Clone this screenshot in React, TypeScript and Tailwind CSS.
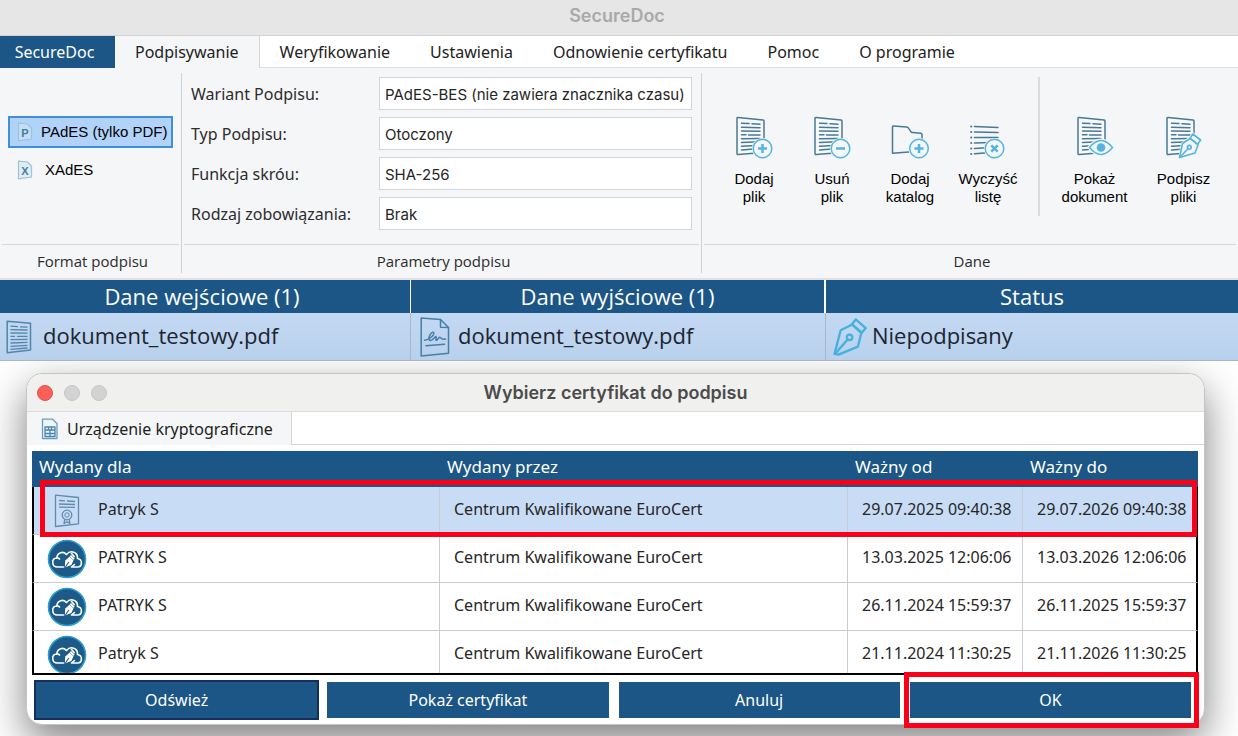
import type { ReactNode } from "react";
import clsx from "clsx";

const TABS = ["Podpisywanie", "Weryfikowanie", "Ustawienia", "Odnowienie certyfikatu", "Pomoc", "O programie"];

const FIELDS = [
  { id: "variant", label: "Wariant Podpisu:", value: "PAdES-BES (nie zawiera znacznika czasu)" },
  { id: "type", label: "Typ Podpisu:", value: "Otoczony" },
  { id: "hash", label: "Funkcja skróu:", value: "SHA-256" },
  { id: "commitment", label: "Rodzaj zobowiązania:", value: "Brak" },
];

const CERTS = [
  { name: "Patryk S", from: "29.07.2025 09:40:38", to: "29.07.2026 09:40:38", selected: true },
  { name: "PATRYK S", from: "13.03.2025 12:06:06", to: "13.03.2026 12:06:06", selected: false },
  { name: "PATRYK S", from: "26.11.2024 15:59:37", to: "26.11.2025 15:59:37", selected: false },
  { name: "Patryk S", from: "21.11.2024 11:30:25", to: "21.11.2026 11:30:25", selected: false },
];

const DARK = "#4a7895";
const LIGHT = "#55b4e2";
const PAPER = "#f4f6f8";

function IconBox({ children }: { children: ReactNode }) {
  return (
    <svg width="40" height="44" viewBox="0 0 40 44" fill="none" strokeLinecap="round" strokeLinejoin="round">
      {children}
    </svg>
  );
}

function Sheet() {
  return (
    <g stroke={DARK} strokeWidth="1.5">
      <path d="M4.2 1.5 29 4q1 .1 1 1v30.500q0 1-1 1.100L4.200 38.500q-1.200.1-1.200-1V2.500q0-1.100 1.200-1Z" fill="#f6fafd" />
      <path d="M7.500 7.200 15 7.600M18 7.800 26 8.200M7.500 11.200 26 11.800M7.500 15 26 15.300M7.500 18.800 12 18.800M14.500 18.900 26 18.900M7.500 22.700 26 22.400M7.500 26.500 26 25.800M7.500 30.200 26 29.200M7.500 34 26 32.600" />
    </g>
  );
}

function Badge({ x = 28.5, sign }: { x?: number; sign: "plus" | "minus" | "cross" }) {
  return (
    <g transform={`translate(${x} 32.500)`} stroke={LIGHT}>
      <circle r="10.600" fill={PAPER} stroke="none" />
      <circle r="9.300" fill={PAPER} strokeWidth="1.500" />
      {sign === "plus" && <path d="M-4.500 0H4.500M0-4.500V4.500" strokeWidth="2.500" strokeLinecap="butt" />}
      {sign === "minus" && <path d="M-4.500 0H4.500" strokeWidth="2.500" strokeLinecap="butt" />}
      {sign === "cross" && <path d="M-3.200-3.200 3.200 3.200M3.200-3.200-3.200 3.200" strokeWidth="2.500" strokeLinecap="butt" />}
    </g>
  );
}

function Pen() {
  return (
    <>
      <path d="M14 43 17 27 26 20 29 16 38 24 33 38Z" fill={PAPER} stroke="none" />
      <path d="M15.500 41.500 18.500 27.500 26 22.500 34 29 31 37Z" fill={PAPER} />
      <path d="M26.200 22.200 28.800 18 36.600 24 33.600 28.200Z" fill={PAPER} />
      <path d="M16 41 24.300 32.500" />
      <circle cx="25.300" cy="31.300" r="1.900" />
    </>
  );
}

const ACTIONS = [
  { lines: ["Dodaj", "plik"], icon: <><Sheet /><Badge sign="plus" /></> },
  { lines: ["Usuń", "plik"], icon: <><Sheet /><Badge sign="minus" /></> },
  {
    lines: ["Dodaj", "katalog"],
    icon: (
      <>
        <path d="M2.500 11q0-1.100 1.200-1L16.500 11q1.500.1 2.200 1.300l2 3q.7 1.200 2 1.300l8 .7q1.300.1 1.300 1.300V35L2.500 37.300Z" stroke={DARK} strokeWidth="1.500" />
        <Badge x={29} sign="plus" />
      </>
    ),
  },
  {
    lines: ["Wyczyść", "listę"],
    icon: (
      <>
        <g stroke={DARK} strokeWidth="1.500">
          <path d="M6.500 10.500 30 11.500M6.500 16 30 16.500M6.500 21.400H30M6.500 27 30 26.300M6.500 32.500 30 31M6.500 37.800 20 36.800" />
          <path d="M3.200 10.400h.1M3.200 16h.1M3.200 21.400h.1M3.200 27h.1M3.200 32.500h.1M3.200 37.900h.1" strokeWidth="2" />
        </g>
        <Badge x={26.500} sign="cross" />
      </>
    ),
  },
];

const DOC_ACTIONS = [
  {
    lines: ["Pokaż", "dokument"],
    icon: (
      <>
        <Sheet />
        <path d="M14.500 31.500Q26 17.500 37.500 31.500Q26 45.500 14.500 31.500Z" fill={PAPER} stroke={PAPER} strokeWidth="4" />
        <path d="M14.500 31.500Q26 17.500 37.500 31.500Q26 45.500 14.500 31.500Z" fill={PAPER} stroke={LIGHT} strokeWidth="1.500" />
        <circle cx="26" cy="31.500" r="4.300" fill={LIGHT} />
      </>
    ),
  },
  {
    lines: ["Podpisz", "pliki"],
    icon: (
      <>
        <Sheet />
        <g stroke={LIGHT} strokeWidth="1.600"><Pen /></g>
      </>
    ),
  },
];

function ActionButton({ lines, icon, wide }: { lines: string[]; icon: ReactNode; wide?: boolean }) {
  return (
    <button
      className={clsx(
        "flex flex-col items-center gap-2.5 text-center font-['Liberation_Sans',sans-serif] text-[15px] leading-[18px] text-black",
        wide ? "w-[89px]" : "w-[78px]",
      )}
    >
      <IconBox>{icon}</IconBox>
      <span>
        {lines[0]}
        <br />
        {lines[1]}
      </span>
    </button>
  );
}

function FormatIcon({ letter }: { letter: string }) {
  return (
    <svg width="16" height="20" viewBox="0 0 16 20" fill="none">
      <path d="M1.500 1.200 10.500 2 14.500 6V17L1.500 18.800Z" fill="#d3e6f2" fillOpacity="0.600" stroke="#9cc3da" strokeWidth="1.200" />
      <text x="8" y="14.500" textAnchor="middle" fontSize="11" fontWeight="700" fontFamily="Liberation Sans, sans-serif" fill="#3f7fa3">
        {letter}
      </text>
    </svg>
  );
}

function FileIcon() {
  return (
    <svg width="26" height="34" viewBox="0 0 26 34" fill="none" stroke="#4f86ac" strokeWidth="1.500" strokeLinejoin="round">
      <path d="M1.200 1.200 24.500 3.200V30L1.200 32.700Z" />
      <path d="M4.500 6.200 12 6.600M14 6.800 21.500 7.200M4.500 9.600 21.500 10M4.500 13 21.500 13.200M4.500 16.400H9M11 16.400H21.500M4.500 19.700 21.500 19.400M4.500 23 21.500 22.400M4.500 26.300 21.500 25.400M4.500 29.300 21.500 28" strokeWidth="1.300" />
    </svg>
  );
}

function SignedFileIcon() {
  return (
    <svg width="30" height="40" viewBox="0 0 30 40" fill="none" stroke="#457fa6" strokeWidth="1.500" strokeLinejoin="round" strokeLinecap="round">
      <path d="M1.200 1 20.500 2.500 28.500 10.500V36.200L1.200 39Z" />
      <path d="M20.500 2.500V10.200L28.500 10.500" />
      <path d="M4.500 23.200C9 23 15.500 17.500 13.500 15.300C11.500 14 7 21.500 10 23.500C12.500 24 14 20 16 19.500C17 20 15 23.500 16.500 23.300C18.500 22 19 19.500 20.500 20.500C21 22 22 22.500 25.500 22" />
      <path d="M6 28.800 24.500 27.300" />
    </svg>
  );
}

function StatusPenIcon() {
  return (
    <svg width="36" height="38" viewBox="14 16.500 24 26.500" fill="none" stroke="#45b1dc" strokeWidth="1.600" strokeLinejoin="round">
      <path d="M15.200 41.500 19.500 25 27.500 21 34 26.500 31.500 36.500 18 42Z" />
      <path d="M27.300 21 30 17.500 37 23.500 34 27Z" />
      <path d="M16 41 24.800 31" />
      <circle cx="25.700" cy="30" r="1.900" />
    </svg>
  );
}

function SimIcon() {
  return (
    <svg width="18" height="22" viewBox="0 0 18 22" fill="none" stroke="#6c9cb8" strokeWidth="1.300" strokeLinejoin="round">
      <path d="M1.500 1.200H11.500L16 5.500V20.500H1.500Z" fill="#eef6fb" />
      <path d="M4 9H14V18.500H4ZM4 12H7.500V9M4 15.500H14M10.500 9V12H14M9 12V18.500M7.500 12H10.500" stroke="#4a86a8" />
    </svg>
  );
}

function CertIcon() {
  return (
    <svg width="26" height="34" viewBox="0 0 26 34" fill="none" stroke="#5f8bb0" strokeWidth="1.300" strokeLinejoin="round">
      <path d="M1.500 1.200 24.500 3.500V29.800L1.500 32.500Z" />
      <path d="M5 6.500 11 6.900M13 7 21 7.500M5 10 21 10.500M5 13.200 21 13.400" />
      <circle cx="13" cy="21" r="4.800" />
      <circle cx="13" cy="21" r="2.200" strokeWidth="1" />
      <path d="M10.800 25.500 10 29.500 13 27.800 16 29.300 15.200 25.400" />
    </svg>
  );
}

function CloudIcon() {
  return (
    <svg width="40" height="40" viewBox="0 0 40 40" fill="none">
      <circle cx="20" cy="20" r="18.500" fill="#1d5a87" stroke="#2c9dcf" strokeWidth="1.600" />
      <g stroke="#fff" strokeWidth="1.600" strokeLinejoin="round" strokeLinecap="round">
        <path d="M16.500 28H10.500C4.500 28 4 19.500 9.800 19C10 13.500 16.500 11.500 19.500 15.500C23.500 10.500 31 13 30.500 19.500C36 20.500 35.500 28 30.500 28H24.500L27.500 25.500" />
        <path d="M9.800 19C11 18.800 12 19.200 12.500 20" />
        <path d="M24.500 14.500 27.200 17.500" />
      </g>
      <path d="M17.800 28.500 18.200 21.500 22.500 17.800 26.500 21.500 24.300 26Z" fill="#fff" />
      <path d="M18.300 28 21.800 23" stroke="#1d5a87" strokeWidth="1.100" />
      <path d="M23.300 16.800 27 20.300" stroke="#fff" strokeWidth="1.900" />
    </svg>
  );
}

function RibbonGroup({ title, className, children }: { title: string; className?: string; children: ReactNode }) {
  return (
    <section className={clsx("flex flex-col", className)}>
      <div className="h-[171px]">{children}</div>
      <h2 className="mx-0.5 border-t border-[#d5d8db] pt-1.5 pl-1 text-center font-['Open_Sans',sans-serif] text-[15px] leading-5 text-[#2c2c2c]">
        {title}
      </h2>
    </section>
  );
}

function Ribbon() {
  return (
    <div className="flex h-[212px] border-b-2 border-[#dfe1e3] bg-[#f4f6f8] py-[5px]">
      <RibbonGroup title="Format podpisu" className="w-[182px] border-r border-[#d0d3d6]">
        <div className="flex flex-col gap-1 px-2 pt-[43px] font-['Liberation_Sans',sans-serif] text-[15px] text-black">
          <button className="flex h-8 items-center gap-2 border-2 border-[#3f8fdd] bg-[#b1d3fa] pl-[7px] whitespace-nowrap">
            <FormatIcon letter="P" />
            PAdES (tylko PDF)
          </button>
          <button className="flex h-9 items-center gap-3 pl-[9px]">
            <FormatIcon letter="X" />
            XAdES
          </button>
        </div>
      </RibbonGroup>

      <RibbonGroup title="Parametry podpisu" className="w-[520px] border-r border-[#d0d3d6]">
        <div className="flex flex-col gap-[7px] pt-1 pr-[9px] pl-[9px]">
          {FIELDS.map((f) => (
            <div key={f.id} className="flex h-[33px] items-center">
              <label htmlFor={f.id} className="w-[188px] text-base text-[#2c2c2c]">
                {f.label}
              </label>
              <select
                id={f.id}
                className="h-[33px] min-w-0 flex-1 appearance-none border border-[#d3d6d9] bg-white px-[5px] pt-1 font-['Inter',sans-serif] text-[15px] text-[#262626]"
              >
                <option>{f.value}</option>
              </select>
            </div>
          ))}
        </div>
      </RibbonGroup>

      <RibbonGroup title="Dane" className="flex-1">
        <div className="flex pt-1 pl-[13px]">
          <div className="flex border-r-2 border-[#d9dcdf] pt-[39px] pr-[11px] pb-2.5">
            {ACTIONS.map((a) => (
              <ActionButton key={a.lines.join(" ")} {...a} />
            ))}
          </div>
          <div className="flex pt-[39px] pl-2.5">
            {DOC_ACTIONS.map((a) => (
              <ActionButton key={a.lines.join(" ")} {...a} wide />
            ))}
          </div>
        </div>
      </RibbonGroup>
    </div>
  );
}

function FileTable() {
  const cell = "h-12 border-r border-b border-[#a9b6c4] py-0 last:border-r-0";
  const head = "py-0 pb-px font-normal";
  return (
    <table className="w-full table-fixed border-separate border-spacing-0 font-['Open_Sans',sans-serif] text-[22px] leading-8">
      <thead>
        <tr className="bg-[#1b5686] text-white">
          <th className={clsx(head, "h-[33px] w-[411px] border-r border-white pr-1.5")}>Dane wejściowe (1)</th>
          <th className={clsx(head, "w-[415px] border-r-2 border-white")}>Dane wyjściowe (1)</th>
          <th className={head}>Status</th>
        </tr>
      </thead>
      <tbody>
        <tr className="bg-linear-to-b from-[#c3d9f3] to-[#b9d0ec] text-[#1b2530]">
          <td className={clsx(cell, "pl-1.5")}>
            <div className="flex items-center gap-[11px]">
              <FileIcon />
              <span className="pb-1">dokument_testowy.pdf</span>
            </div>
          </td>
          <td className={clsx(cell, "pl-[9px]")}>
            <div className="flex items-center gap-2">
              <SignedFileIcon />
              <span className="pb-1">dokument_testowy.pdf</span>
            </div>
          </td>
          <td className={clsx(cell, "pl-1.5")}>
            <div className="flex items-center gap-1">
              <StatusPenIcon />
              <span className="pb-1">Niepodpisany</span>
            </div>
          </td>
        </tr>
      </tbody>
    </table>
  );
}

function CertTable() {
  return (
    <div className="relative mr-1.5 ml-[5px]">
      <div className="h-[224px] overflow-hidden border-b-2 border-black">
        <table className="w-full table-fixed border-separate border-spacing-0 text-left text-base whitespace-nowrap">
          <thead>
            <tr className="h-9 bg-[#1b5686] text-[17px] text-white *:py-0 *:pb-1 *:pl-[7px] *:font-normal">
              <th>Wydany dla</th>
              <th>Wydany przez</th>
              <th className="w-[175px]">Ważny od</th>
              <th className="w-[175px]">Ważny do</th>
            </tr>
          </thead>
          <tbody>
            {CERTS.map((c) => (
              <tr
                key={c.from}
                className={clsx(
                  "h-12 text-[#262626] *:border-r *:border-b *:border-[#c9ccd0] *:py-0 *:last:border-r-2 *:last:border-r-black",
                  c.selected && "bg-[#c8dcf6]",
                )}
              >
                <td className="border-l-2 border-l-black! pl-[13px]">
                  <div className="flex items-center gap-[11px]">
                    <span className="flex w-10 shrink-0 justify-center">{c.selected ? <CertIcon /> : <CloudIcon />}</span>
                    <span className="pb-1">{c.name}</span>
                  </div>
                </td>
                <td className="pb-1! pl-3.5">Centrum Kwalifikowane EuroCert</td>
                <td className="pb-1! pl-3.5">{c.from}</td>
                <td className="pb-1! pl-3.5">{c.to}</td>
              </tr>
            ))}
          </tbody>
        </table>
      </div>
      <div className="pointer-events-none absolute top-[29px] right-px left-2 h-[57px] border-5 border-[#fb0019]" />
    </div>
  );
}

function CertDialog() {
  const button = "h-9 w-full bg-[#1b5686] text-base text-white";
  return (
    <div
      role="dialog"
      aria-labelledby="dialog-title"
      className="rounded-2xl border border-[#c4c4c4] bg-white pb-1.5 shadow-[0_16px_40px_rgba(0,0,0,0.5)]"
    >
      <header className="flex h-[38px] items-center rounded-t-2xl border-b border-[#dcdcdb] bg-[#f0f0ef] pl-2.5">
        <div className="flex w-0 gap-[11px]">
          <button aria-label="Zamknij" className="size-4 shrink-0 rounded-full border border-[#e2504a] bg-[#fb5f57]" />
          <button aria-label="Minimalizuj" className="size-4 shrink-0 rounded-full border border-[#c6c6c6] bg-[#d3d3d3]" />
          <button aria-label="Maksymalizuj" className="size-4 shrink-0 rounded-full border border-[#c6c6c6] bg-[#d3d3d3]" />
        </div>
        <h2 id="dialog-title" className="flex-1 pr-2.5 text-center font-['Inter',sans-serif] text-lg font-semibold text-[#4b4b4b]">
          Wybierz certyfikat do podpisu
        </h2>
      </header>

      <div className="mb-1.5 flex h-[33px]">
        <button className="flex w-[265px] items-center gap-2 border-r border-[#d3d6d9] bg-[#f4f6f8] pl-3.5 text-base whitespace-nowrap text-[#222]">
          <SimIcon />
          Urządzenie kryptograficzne
        </button>
        <div className="flex-1 border-b border-[#d3d6d9]" />
      </div>

      <CertTable />

      <div className="mt-[7px] grid grid-cols-4 gap-2.5 pr-[13px] pl-[9px]">
        <button className={clsx(button, "ring-2 ring-[#12305f]")}>Odśwież</button>
        <button className={button}>Pokaż certyfikat</button>
        <button className={button}>Anuluj</button>
        <div className="relative">
          <button className={button}>OK</button>
          <div className="pointer-events-none absolute -inset-y-2.5 -right-2 -left-1.5 border-5 border-[#fb0019]" />
        </div>
      </div>
    </div>
  );
}

export default function App() {
  return (
    <div className="flex min-h-screen flex-col overflow-hidden bg-white font-['Noto_Sans',sans-serif]">
      <header className="flex h-9 items-center justify-center border-b border-[#d2d2d2] bg-[#e6e6e6] pr-1 pb-1">
        <h1 className="font-['Inter',sans-serif] text-lg font-semibold text-[#a9a9a9]">SecureDoc</h1>
      </header>

      <nav className="flex h-8 text-base text-[#222]">
        <button className="w-[115px] bg-[#1b5686] pr-1.5 text-white">SecureDoc</button>
        {TABS.map((tab, i) => (
          <button
            key={tab}
            className={clsx("px-5", i === 0 ? "border-r border-[#d3d6d9] bg-[#f4f6f8]" : "border-b border-[#dcdfe2] bg-white")}
          >
            {tab}
          </button>
        ))}
        <div className="flex-1 border-b border-[#dcdfe2]" />
      </nav>

      <Ribbon />
      <FileTable />

      <main className="flex-1 overflow-hidden pt-3 pr-[33px] pb-2.5 pl-[26px]">
        <CertDialog />
      </main>
    </div>
  );
}
